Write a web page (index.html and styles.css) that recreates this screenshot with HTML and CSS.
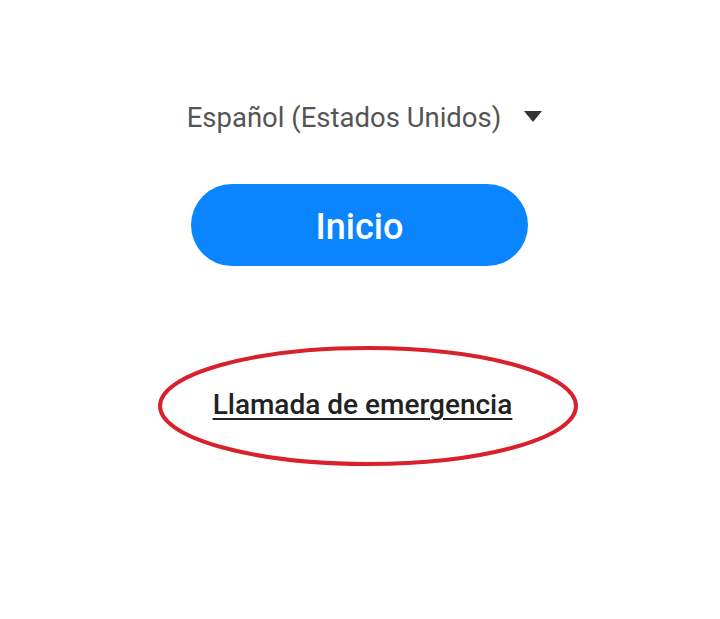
FILE: index.html
```html
<!DOCTYPE html>
<html lang="es">
<head>
<meta charset="utf-8">
<link rel="stylesheet" href="styles.css">
</head>
<body>
<main class="screen">
  <div class="lang">
    <span class="lang-label">Español (Estados Unidos)</span>
    <svg class="caret" width="20" height="13" viewBox="0 0 20 13"><path d="M1 1 H19 L10 12 Z" fill="#333"/></svg>
  </div>
  <button class="start">Inicio</button>
  <div class="emergency">
    <a class="emergency-link" href="#">Llamada de emergencia</a>
    <svg class="mark" width="430" height="130" viewBox="0 0 430 130"><ellipse cx="215" cy="65" rx="208" ry="58" fill="none" stroke="#d8212b" stroke-width="4"/></svg>
  </div>
</main>
</body>
</html>
```
FILE: styles.css
```css
html, body { margin: 0; padding: 0; background: #fff; }
body { width: 720px; height: 619px; overflow: hidden; font-family: Roboto, "Noto Sans", sans-serif; }
.screen { display: flex; flex-direction: column; align-items: center; padding-top: 100px; padding-left: 8px; }
.lang { display: flex; align-items: center; gap: 22px; height: 34px; margin-left: 2px; }
.lang-label { font-size: 27.5px; color: #555; }
.caret { display: block; margin-top: -2px; }
.start { margin-top: 50px; width: 337px; height: 82px; border: none; border-radius: 41px; background: #0a84ff; color: #fff; font-family: Roboto, sans-serif; font-weight: 500; font-size: 36px; padding: 4px 0 0; margin-left: -9px; }
.emergency { position: relative; margin-top: 122px; margin-left: -3px; }
.emergency-link { font-size: 28px; font-weight: 500; color: #222; text-decoration: underline; text-underline-offset: 4px; text-decoration-thickness: 2px; }
.mark { position: absolute; left: 50%; top: 50%; transform: translate(-50%, -50%); margin-left: 6px; margin-top: 1px; }
```
